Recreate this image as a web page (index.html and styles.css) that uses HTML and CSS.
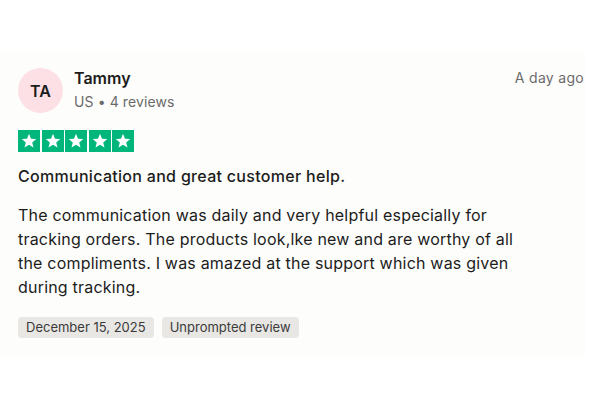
FILE: index.html
```html
<!DOCTYPE html>
<html>
<head>
<meta charset="utf-8">
<link rel="stylesheet" href="styles.css">
</head>
<body>
<div class="card">
  <div class="header">
    <div class="avatar">TA</div>
    <div class="who">
      <div class="name">Tammy</div>
      <div class="meta">US • 4 reviews</div>
    </div>
    <div class="when">A day ago</div>
  </div>
  <div class="stars">
    <span class="star"><svg viewBox="0 0 24 24"><path d="M12 4.2l2.2 5.3 5.7.4-4.4 3.7 1.4 5.6L12 16.2l-4.9 3 1.4-5.6-4.4-3.7 5.7-.4z" fill="#fff"/></svg></span>
    <span class="star"><svg viewBox="0 0 24 24"><path d="M12 4.2l2.2 5.3 5.7.4-4.4 3.7 1.4 5.6L12 16.2l-4.9 3 1.4-5.6-4.4-3.7 5.7-.4z" fill="#fff"/></svg></span>
    <span class="star"><svg viewBox="0 0 24 24"><path d="M12 4.2l2.2 5.3 5.7.4-4.4 3.7 1.4 5.6L12 16.2l-4.9 3 1.4-5.6-4.4-3.7 5.7-.4z" fill="#fff"/></svg></span>
    <span class="star"><svg viewBox="0 0 24 24"><path d="M12 4.2l2.2 5.3 5.7.4-4.4 3.7 1.4 5.6L12 16.2l-4.9 3 1.4-5.6-4.4-3.7 5.7-.4z" fill="#fff"/></svg></span>
    <span class="star"><svg viewBox="0 0 24 24"><path d="M12 4.2l2.2 5.3 5.7.4-4.4 3.7 1.4 5.6L12 16.2l-4.9 3 1.4-5.6-4.4-3.7 5.7-.4z" fill="#fff"/></svg></span>
  </div>
  <h2 class="title">Communication and great customer help.</h2>
  <p class="body">The communication was daily and very helpful especially for tracking orders. The products look,lke new and are worthy of all the compliments. I was amazed at the support which was given during tracking.</p>
  <div class="tags">
    <span class="tag">December 15, 2025</span>
    <span class="tag">Unprompted review</span>
  </div>
</div>
</body>
</html>
```
FILE: styles.css
```css
html, body {
  margin: 0;
  padding: 0;
  background: #ffffff;
}
body {
  font-family: "Inter", "Liberation Sans", sans-serif;
  color: #1c1c1c;
  padding-top: 52px;
}
.card {
  width: 585px;
  background: #fdfdfb;
  padding: 16px 0 18px 18px;
  box-sizing: border-box;
}
.header {
  display: flex;
  align-items: flex-start;
  padding-right: 1px;
}
.avatar {
  width: 45px;
  height: 45px;
  border-radius: 50%;
  background: #fde0e5;
  display: flex;
  align-items: center;
  justify-content: center;
  font-size: 16px;
  font-weight: 600;
  color: #1c1c1c;
  flex: none;
}
.who {
  margin-left: 11px;
  flex: 1;
}
.name {
  font-size: 16px;
  font-weight: 600;
  line-height: 20px;
}
.meta {
  font-size: 14px;
  color: #6b6b6b;
  line-height: 20px;
  margin-top: 4px;
  letter-spacing: 0.1px;
}
.when {
  font-size: 14px;
  color: #6b6b6b;
  line-height: 20px;
  letter-spacing: 0.3px;
}
.stars {
  display: flex;
  gap: 1.5px;
  margin-top: 17px;
}
.star {
  width: 22px;
  height: 22px;
  background: #00b67a;
  display: flex;
}
.star svg {
  width: 22px;
  height: 22px;
}
.title {
  font-size: 16px;
  font-weight: 500;
  margin: 13px 0 0;
  line-height: 22px;
  letter-spacing: 0.3px;
}
.body {
  font-size: 16px;
  line-height: 24px;
  margin: 16px 0 0;
  width: 524px;
  letter-spacing: 0.2px;
}
.tags {
  display: flex;
  gap: 8px;
  margin-top: 18px;
}
.tag {
  background: #e8e7e4;
  border-radius: 4px;
  font-size: 13px;
  line-height: 21px;
  padding: 0 8px;
  color: #3b3b3b;
}
```
